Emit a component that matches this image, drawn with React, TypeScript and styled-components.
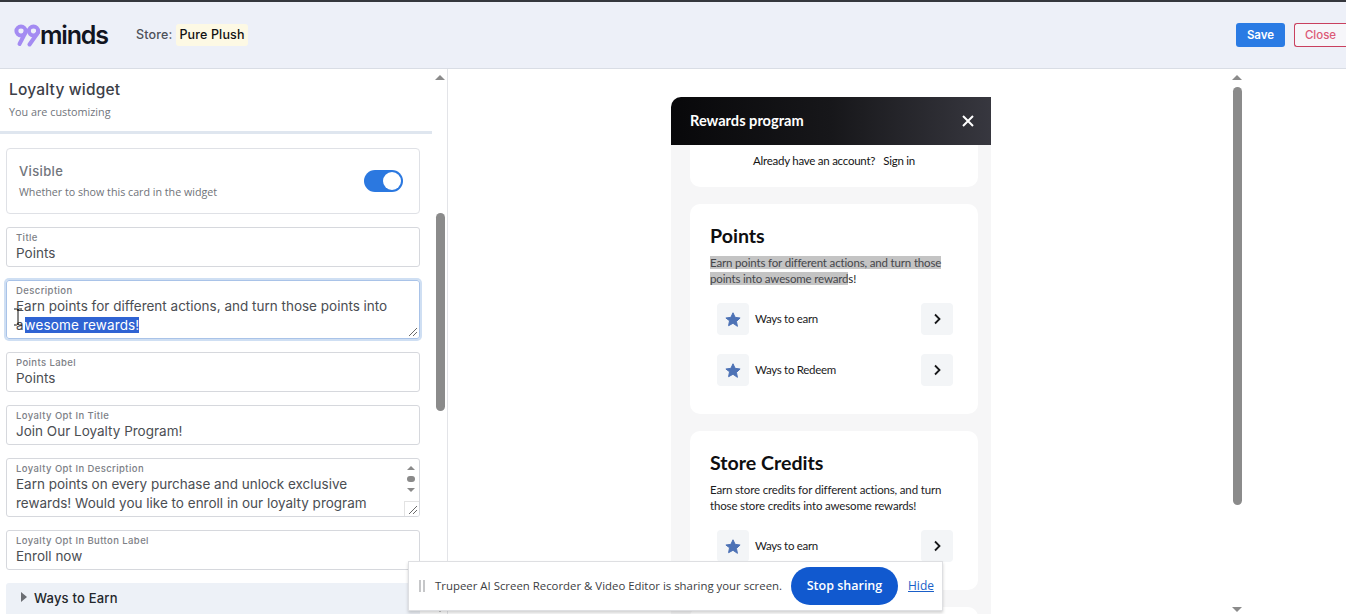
import React from "react";
import styled, { createGlobalStyle } from "styled-components";

const Global = createGlobalStyle`
  html, body { margin: 0; padding: 0; height: 614px; overflow: hidden; background: #fff; }
  * { box-sizing: border-box; }
  #root { height: 614px; }
`;

const UI = `Inter, "Noto Sans", sans-serif`;
const SUB = `"Open Sans", "Noto Sans", sans-serif`;
const PREVIEW = `Lato, "Noto Sans", sans-serif`;

const Page = styled.div`
  position: relative;
  width: 1346px;
  height: 614px;
  overflow: hidden;
  display: flex;
  flex-direction: column;
  border-top: 2px solid #35373d;
`;

const Header = styled.header`
  height: 67px;
  flex: none;
  display: flex;
  align-items: center;
  background: #edf0f8;
  border-bottom: 1px solid #d9dde5;
  padding: 0 0 0 14px;
`;

const Logo = styled.div`
  display: flex;
  align-items: center;
  width: 122px;
`;

const LogoWord = styled.span`
  font: 600 25px/28px ${UI};
  letter-spacing: -1.2px;
  color: #12151f;
  margin-left: -1px;
`;

const StoreLabel = styled.span`
  font: 500 12.5px/16px ${UI};
  color: #4d5159;
  letter-spacing: 0.15px;
  margin-right: 4px;
`;

const StoreChip = styled.span`
  background: #fdf9e4;
  color: #111;
  font: 500 12.5px/22px ${UI};
  letter-spacing: 0.15px;
  padding: 0 3px;
  border-radius: 3px;
`;

const HeaderActions = styled.div`
  margin-left: auto;
  display: flex;
  gap: 9px;
`;

const SaveButton = styled.button`
  width: 49px;
  height: 24px;
  border: 0;
  border-radius: 3px;
  background: #2a7be4;
  color: #fff;
  font: 600 11.5px/24px ${UI};
  padding: 0;
`;

const CloseButton = styled.button`
  width: 52px;
  height: 24px;
  border: 1px solid #c9405f;
  border-right: 0;
  border-radius: 3px 0 0 3px;
  background: #f6f6fa;
  color: #dc5a78;
  font: 500 11.5px/22px ${UI};
  padding: 0;
`;

const Body = styled.div`
  flex: 1;
  display: flex;
  min-height: 0;
`;

const Sidebar = styled.aside`
  width: 448px;
  flex: none;
  display: flex;
  border-right: 1px solid #e3e4e8;
`;

const SideColumn = styled.div`
  width: 432px;
  flex: none;
  overflow: hidden;
`;

const SideHead = styled.div`
  height: 65px;
  padding: 11px 9px 0;
  border-bottom: 3px solid #dfe6ef;
  margin-bottom: 14px;
`;

const SideTitle = styled.h1`
  margin: 0;
  font: 500 15.5px/20px ${UI};
  letter-spacing: 0.2px;
  color: #3c4048;
`;

const SideSub = styled.p`
  margin: 4px 0 0;
  font: 400 10.8px/15px ${SUB};
  color: #71757c;
`;

const FormStack = styled.div`
  display: flex;
  flex-direction: column;
  gap: 13px;
  padding: 0 12px 0 6px;
`;

const VisibleCard = styled.div`
  height: 66px;
  display: flex;
  align-items: center;
  justify-content: space-between;
  padding: 0 16px 0 12px;
  border: 1px solid #dfe1e6;
  border-radius: 4px;
`;

const VisibleName = styled.div`
  font: 500 13px/18px ${UI};
  letter-spacing: 0.35px;
  color: #71757c;
  margin-top: -1px;
`;

const VisibleHint = styled.div`
  margin-top: 4px;
  font: 400 10.7px/16px ${SUB};
  color: #6f7379;
`;

const Toggle = styled.div`
  width: 39px;
  height: 22px;
  border-radius: 11px;
  background: #2b78e0;
  display: flex;
  justify-content: flex-end;
  align-items: center;
  padding-right: 2px;
`;

const Knob = styled.div`
  width: 18px;
  height: 18px;
  border-radius: 50%;
  background: #fff;
`;

const Field = styled.div<{ $focus?: boolean; $tall?: boolean }>`
  position: relative;
  height: ${(p) => (p.$tall ? "59px" : "40px")};
  padding: 4px 9px 0;
  border: 1px solid ${(p) => (p.$focus ? "#a9c3e8" : "#d6d8dd")};
  border-radius: 3px;
  box-shadow: ${(p) => (p.$focus ? "0 0 0 2px #cfdff3" : "none")};
  overflow: ${(p) => (p.$focus ? "visible" : "hidden")};
`;

const FieldLabel = styled.div`
  font: 500 9.5px/12px ${UI};
  letter-spacing: 0.4px;
  color: #7d8086;
`;

const FieldValue = styled.div`
  font: 400 13.5px/19px ${UI};
  letter-spacing: 0;
  color: #4b4e53;
  white-space: pre;
`;

const Selected = styled.span`
  background: #2f63d3;
  color: #fff;
  letter-spacing: 0.14px;
  margin-left: 1px;
`;

const Grip = styled.svg`
  position: absolute;
  right: 1px;
  bottom: 1px;
`;

const Cursor = styled.svg`
  position: absolute;
  left: 6px;
  top: 27px;
`;

const MiniScroll = styled.div`
  position: absolute;
  right: 0;
  top: 0;
  width: 16px;
  height: 57px;
  display: flex;
  flex-direction: column;
  align-items: center;
  padding-top: 7px;
  gap: 6px;
`;

const MiniUp = styled.div`
  width: 0;
  height: 0;
  flex: none;
  border-left: 4px solid transparent;
  border-right: 4px solid transparent;
  border-bottom: 4px solid #8a8a8a;
`;

const MiniDown = styled(MiniUp)`
  transform: rotate(180deg);
`;

const MiniThumb = styled.div`
  width: 8px;
  height: 6px;
  flex: none;
  border-radius: 3px;
  background: #8a8a8a;
`;

const MiniCorner = styled.div`
  position: absolute;
  right: 0;
  bottom: 0;
  width: 15px;
  height: 15px;
  background: #fff;
  border-left: 1px solid #e3e3e3;
  border-top: 1px solid #e3e3e3;
`;

const Accordion = styled.div`
  height: 40px;
  background: #edf1f7;
  border-radius: 3px;
  display: flex;
  align-items: flex-start;
  padding: 7px 0 0 15px;
  font: 500 13px/16px ${UI};
  letter-spacing: 0.2px;
  color: #23262b;
`;

const Caret = styled.span`
  width: 0;
  height: 0;
  border-top: 5px solid transparent;
  border-bottom: 5px solid transparent;
  border-left: 6px solid #6b6e73;
  margin: 2px 7px 0 0;
`;

const Scrollbar = styled.div`
  width: 16px;
  flex: none;
  display: flex;
  flex-direction: column;
  align-items: center;
  padding-top: 6px;
`;

const ArrowUp = styled.div`
  width: 0;
  height: 0;
  border-left: 5px solid transparent;
  border-right: 5px solid transparent;
  border-bottom: 5px solid #8b8b8b;
`;

const ArrowDown = styled(ArrowUp)`
  transform: rotate(180deg);
  margin-top: auto;
  margin-bottom: 2px;
`;

const Thumb = styled.div<{ $top: number; $height: number }>`
  width: 9px;
  height: ${(p) => p.$height}px;
  margin-top: ${(p) => p.$top}px;
  border-radius: 5px;
  background: #8b8b8b;
`;

const Stage = styled.main`
  flex: 1;
  display: flex;
  min-width: 0;
`;

const PreviewArea = styled.div`
  width: 781px;
  flex: none;
  padding: 28px 0 0 223px;
  overflow: hidden;
`;

const Widget = styled.div`
  width: 320px;
  height: 520px;
  background: #f6f6f7;
  border-radius: 10px 0 0 0;
  overflow: hidden;
`;

const WidgetBar = styled.div`
  height: 48px;
  display: flex;
  align-items: center;
  justify-content: space-between;
  padding: 0 16px 0 19px;
  background: linear-gradient(90deg, #08080a 0%, #17171a 50%, #37373f 100%);
  color: #fff;
  font: 700 14.6px/18px ${PREVIEW};
`;

const WidgetList = styled.div`
  display: flex;
  flex-direction: column;
  gap: 17px;
  padding: 0 13px 0 19px;
`;

const WidgetCard = styled.section<{ $height: number }>`
  height: ${(p) => p.$height}px;
  background: #fff;
  border-radius: 10px;
  padding: 18px 20px 0 20px;
`;

const SignInCard = styled.div`
  height: 42px;
  background: #fff;
  border-radius: 0 0 10px 10px;
  padding-top: 8px;
  text-align: center;
  font: 400 11.5px/16px ${PREVIEW};
  letter-spacing: -0.25px;
  color: #141414;
  white-space: pre;
`;

const CardTitle = styled.h2`
  margin: 0 0 5px;
  font: 700 19.6px/28px ${PREVIEW};
  color: #0e0e10;
`;

const CardText = styled.p`
  margin: 0 0 16px;
  font: 400 11.5px/16px ${PREVIEW};
  letter-spacing: -0.16px;
  color: #1c1c1e;
  white-space: pre;
`;

const Highlight = styled.span`
  background: #c4c4c4;
  color: #44464a;
`;

const LinkRows = styled.div`
  display: flex;
  flex-direction: column;
  gap: 19px;
  padding: 0 5px 0 7px;
`;

const LinkRow = styled.div`
  display: flex;
  align-items: center;
  font: 400 11.5px/16px ${PREVIEW};
  letter-spacing: -0.3px;
  color: #1a1a1c;
`;

const IconTile = styled.div`
  width: 32px;
  height: 32px;
  border-radius: 4px;
  background: #f3f5f7;
  display: flex;
  align-items: center;
  justify-content: center;
  margin-right: 6px;
`;

const ChevronTile = styled(IconTile)`
  margin: 0 0 0 auto;
`;

const ShareBar = styled.div`
  position: absolute;
  left: 408px;
  top: 559px;
  width: 535px;
  height: 50px;
  display: flex;
  align-items: center;
  background: #fff;
  border: 1px solid #dedfe2;
  box-shadow: 0 2px 3px rgba(0, 0, 0, 0.18);
  padding-left: 10px;
  font: 400 11.4px/16px ${SUB};
  color: #3c4043;
  white-space: nowrap;
`;

const DragHandle = styled.div`
  width: 6px;
  height: 12px;
  flex: none;
  border-left: 2px solid #c6c7c9;
  border-right: 2px solid #c6c7c9;
  margin-right: 10px;
`;

const ShareText = styled.span`
  width: 346px;
  flex: none;
`;

const StopButton = styled.button`
  width: 107px;
  height: 38px;
  flex: none;
  border: 0;
  border-radius: 19px;
  background: #1159cf;
  color: #fff;
  font: 600 12.5px/38px ${SUB};
  margin-left: 10px;
  padding: 0;
`;

const HideLink = styled.a`
  margin-left: 10px;
  color: #1a5fc8;
  text-decoration: underline;
  font: 400 12px/16px ${SUB};
`;

const Star = () => (
  <svg width="16" height="15" viewBox="0 0 24 23">
    <path
      d="M12 1.2l3.3 7 7.6 1-5.6 5.2 1.5 7.6L12 17.3 5.2 21l1.5-7.6L1.1 9.2l7.6-1z"
      fill="#4d72b5"
      stroke="#4d72b5"
      strokeWidth="1.5"
      strokeLinejoin="round"
    />
  </svg>
);

const Chevron = () => (
  <svg width="10" height="12" viewBox="0 0 10 12">
    <path d="M3 1.5L7.5 6 3 10.5" fill="none" stroke="#17181a" strokeWidth="1.8" />
  </svg>
);

const LogoMark = () => (
  <svg width="27" height="24" viewBox="0 0 27 24">
    <g fill="none" stroke="#a48bf2" strokeWidth="4" strokeLinecap="round">
      <ellipse cx="7" cy="8" rx="4.6" ry="4.4" />
      <path d="M11.500 9.500L5.500 21" />
      <ellipse cx="19.500" cy="8" rx="4.600" ry="4.400" />
      <path d="M24 9.500L15.500 21.500" />
    </g>
  </svg>
);

const ResizeGrip = () => (
  <Grip width="10" height="10" viewBox="0 0 10 10">
    <path d="M1 9L9 1M5 9L9 5" stroke="#6a6a6a" strokeWidth="1" />
  </Grip>
);

const LinkItem = ({ label }: { label: string }) => (
  <LinkRow>
    <IconTile>
      <Star />
    </IconTile>
    {label}
    <ChevronTile>
      <Chevron />
    </ChevronTile>
  </LinkRow>
);

export default function App() {
  return (
    <Page>
      <Global />
      <Header>
        <Logo>
          <LogoMark />
          <LogoWord>minds</LogoWord>
        </Logo>
        <StoreLabel>Store:</StoreLabel>
        <StoreChip>Pure Plush</StoreChip>
        <HeaderActions>
          <SaveButton>Save</SaveButton>
          <CloseButton>Close</CloseButton>
        </HeaderActions>
      </Header>
      <Body>
        <Sidebar>
          <SideColumn>
            <SideHead>
              <SideTitle>Loyalty widget</SideTitle>
              <SideSub>You are customizing</SideSub>
            </SideHead>
            <FormStack>
              <VisibleCard>
                <div>
                  <VisibleName>Visible</VisibleName>
                  <VisibleHint>Whether to show this card in the widget</VisibleHint>
                </div>
                <Toggle>
                  <Knob />
                </Toggle>
              </VisibleCard>
              <Field>
                <FieldLabel>Title</FieldLabel>
                <FieldValue>Points</FieldValue>
              </Field>
              <Field $focus $tall>
                <FieldLabel>Description</FieldLabel>
                <FieldValue>Earn points for different actions, and turn those points into</FieldValue>
                <FieldValue>
                  a<Selected>wesome rewards!</Selected>
                </FieldValue>
                <Cursor width="10" height="18" viewBox="0 0 10 18">
                  <path d="M1 1h2.500L5 2l1.500-1H9M5 2v14M1 17h2.500L5 16l1.500 1H9" fill="none" stroke="#111" strokeWidth="1" />
                </Cursor>
                <ResizeGrip />
              </Field>
              <Field>
                <FieldLabel>Points Label</FieldLabel>
                <FieldValue>Points</FieldValue>
              </Field>
              <Field>
                <FieldLabel>Loyalty Opt In Title</FieldLabel>
                <FieldValue>Join Our Loyalty Program!</FieldValue>
              </Field>
              <Field $tall>
                <FieldLabel>Loyalty Opt In Description</FieldLabel>
                <FieldValue>Earn points on every purchase and unlock exclusive</FieldValue>
                <FieldValue>rewards! Would you like to enroll in our loyalty program</FieldValue>
                <MiniScroll>
                  <MiniUp />
                  <MiniThumb />
                  <MiniDown />
                </MiniScroll>
                <MiniCorner />
                <ResizeGrip />
              </Field>
              <Field>
                <FieldLabel>Loyalty Opt In Button Label</FieldLabel>
                <FieldValue>Enroll now</FieldValue>
              </Field>
              <Accordion>
                <Caret />
                Ways to Earn
              </Accordion>
            </FormStack>
          </SideColumn>
          <Scrollbar>
            <ArrowUp />
            <Thumb $top={133} $height={198} />
            <ArrowDown />
          </Scrollbar>
        </Sidebar>
        <Stage>
          <PreviewArea>
            <Widget>
              <WidgetBar>
                Rewards program
                <svg width="14" height="14" viewBox="0 0 14 14">
                  <path d="M2 2l10 10M12 2L2 12" stroke="#fff" strokeWidth="2" />
                </svg>
              </WidgetBar>
              <WidgetList>
                <SignInCard>Already have an account?   Sign in</SignInCard>
                <WidgetCard $height={210}>
                  <CardTitle>Points</CardTitle>
                  <CardText>
                    <Highlight>Earn points for different actions, and turn those</Highlight>
                    {"\n"}
                    <Highlight>points into awesome reward</Highlight>s!
                  </CardText>
                  <LinkRows>
                    <LinkItem label="Ways to earn" />
                    <LinkItem label="Ways to Redeem" />
                  </LinkRows>
                </WidgetCard>
                <WidgetCard $height={159}>
                  <CardTitle>Store Credits</CardTitle>
                  <CardText>
                    {"Earn store credits for different actions, and turn\nthose store credits into awesome rewards!"}
                  </CardText>
                  <LinkRows>
                    <LinkItem label="Ways to earn" />
                  </LinkRows>
                </WidgetCard>
                <WidgetCard $height={60} />
              </WidgetList>
            </Widget>
          </PreviewArea>
          <Scrollbar>
            <ArrowUp />
            <Thumb $top={7} $height={418} />
            <ArrowDown />
          </Scrollbar>
        </Stage>
      </Body>
      <ShareBar>
        <DragHandle />
        <ShareText>Trupeer AI Screen Recorder &amp; Video Editor is sharing your screen.</ShareText>
        <StopButton>Stop sharing</StopButton>
        <HideLink>Hide</HideLink>
      </ShareBar>
    </Page>
  );
}
